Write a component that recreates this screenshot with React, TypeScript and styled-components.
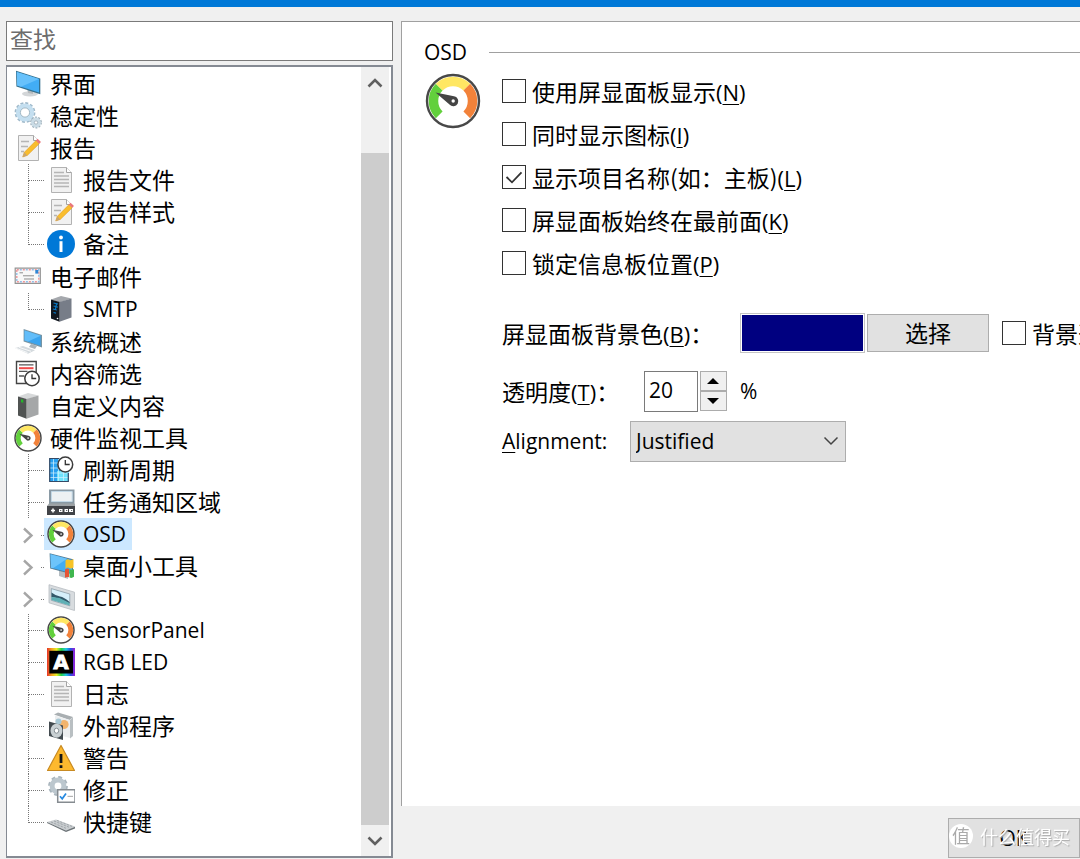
import React, { useState } from 'react';
import styled, { createGlobalStyle, css } from 'styled-components';

const cjk = '"Noto Sans CJK SC", "Open Sans", sans-serif';
const latin = '"Open Sans", "Noto Sans", "Noto Sans CJK SC", sans-serif';

const GlobalStyle = createGlobalStyle`
  *, *::before, *::after { box-sizing: border-box; }
  body {
    margin: 0;
    background: #f0f0f0;
    color: #000;
    font-family: ${cjk};
    font-size: 23px;
    line-height: 32px;
    overflow: hidden;
  }
  button, input, select { font: inherit; color: inherit; margin: 0; border-radius: 0; }
  ul { list-style: none; margin: 0; padding: 0; }
`;

/* ---------- window frame ---------- */

const Window = styled.div`
  display: flex;
  flex-direction: column;
  min-height: 100vh;
`;

const TitleStrip = styled.header`
  height: 7px;
  flex: none;
  background: #0078d7;
`;

const Body = styled.div`
  flex: 1;
  display: grid;
  grid-template-columns: 387px minmax(0, 1fr);
  column-gap: 8px;
  padding: 14px 0 0 6px;
`;

const Sidebar = styled.nav`
  display: flex;
  flex-direction: column;
  gap: 4px;
  padding-bottom: 1px;
`;

const SearchBox = styled.input`
  height: 40px;
  width: 100%;
  padding: 0 3px 6px;
  border: 1px solid #7a7a7a;
  background: #fff;
  outline: none;
  &::placeholder { color: #6d6d6d; opacity: 1; }
`;

const TreeFrame = styled.div`
  flex: 1;
  display: flex;
  justify-content: space-between;
  padding-right: 2px;
  border: 2px solid #858a93;
  border-left-width: 1px;
  background: #fff;
`;

/* ---------- tree ---------- */

const Tree = styled.ul`
  padding: 1px 0 16px 4px;
`;

const SubTree = styled.ul`
  padding: 0 0 1px 11px;
`;

const Row = styled.div`
  display: flex;
  height: 32px;
`;

const NodeButton = styled.button<{ $selected?: boolean }>`
  display: flex;
  align-items: center;
  gap: 8px;
  height: 32px;
  padding: 0 6px 0 3px;
  border: 0;
  background: ${p => (p.$selected ? '#cce8ff' : 'transparent')};
  white-space: nowrap;
`;

const NodeText = styled.span<{ $latin?: boolean }>`
  padding-bottom: 3px;
  line-height: 28px;
  ${p => p.$latin && css`padding-bottom: 0; font-family: ${latin}; font-size: 21px;`}
`;

const Guide = styled.span<{ $last?: boolean }>`
  display: grid;
  grid-template-rows: 17px 15px;
  width: 16px;
  margin-left: 6px;
  &::before {
    content: '';
    border-left: 1px dotted #777;
    border-bottom: 1px dotted #777;
  }
  &::after {
    content: '';
    border-left: ${p => (p.$last ? '0' : '1px dotted #777')};
  }
`;

const Expander = styled.button`
  display: flex;
  align-items: center;
  justify-content: space-between;
  width: 22px;
  height: 32px;
  padding: 2px 0 0;
  border: 0;
  background: none;
  &::after {
    content: '';
    width: 3px;
    border-top: 1px dotted #777;
  }
`;

/* ---------- scroll bar ---------- */

const ScrollBar = styled.div`
  display: flex;
  flex-direction: column;
  width: 28px;
  background: #f0f0f0;
`;

const ScrollArrow = styled.button`
  display: grid;
  place-items: center;
  height: 31px;
  width: 28px;
  padding: 0;
  border: 0;
  background: none;
`;

const Thumb = styled.div`
  flex: 1;
  margin-top: 55px;
  background: #cdcdcd;
`;

/* ---------- settings page ---------- */

const Main = styled.main`
  display: flex;
  flex-direction: column;
`;

const Panel = styled.section`
  flex: 1;
  padding: 14px 0 0 22px;
  border-left: 1px solid #a0a0a0;
  border-top: 1px solid #a0a0a0;
  background: #fff;
  overflow: hidden;
`;

const Heading = styled.h1`
  display: flex;
  align-items: center;
  gap: 22px;
  margin: 0;
  font: 400 21px/32px ${latin};
  &::after {
    content: '';
    flex: 1;
    height: 1px;
    background: #a0a0a0;
  }
`;

const Content = styled.div`
  display: grid;
  grid-template-columns: 57px auto;
  column-gap: 21px;
  align-items: start;
  padding-top: 1px;
  white-space: nowrap;
`;

const GaugeSlot = styled.div`
  padding: 4px 0 0 1px;
  line-height: 0;
`;

const Options = styled.div`
  display: flex;
  flex-direction: column;
  margin-bottom: 26px;
`;

const CheckLabel = styled.label`
  display: flex;
  align-items: center;
  gap: 6px;
  height: 43px;
`;

const CheckCell = styled.span`
  display: grid;
  width: 24px;
  height: 24px;
  & > * { grid-area: 1 / 1; }
  & > svg { pointer-events: none; }
`;

const CheckInput = styled.input`
  appearance: none;
  width: 24px;
  height: 24px;
  border: 1px solid #333;
  background: #fff;
`;

const CheckText = styled.span`
  line-height: 40px;
`;

const Key = styled.span`
  font-family: ${latin};
  font-size: 22px;
  line-height: 32px;
  & > u { text-decoration-thickness: 1px; text-underline-offset: 3px; }
`;

const FieldRow = styled.div<{ $height: number }>`
  display: flex;
  align-items: center;
  height: ${p => p.$height}px;
`;

const FieldLabel = styled.label<{ $width: number; $latin?: boolean }>`
  width: ${p => p.$width}px;
  flex: none;
  ${p => p.$latin && css`font-family: ${latin}; font-size: 21px;`}
  & > u { text-decoration-thickness: 1px; text-underline-offset: 3px; }
`;

const Swatch = styled.button`
  flex: none;
  width: 125px;
  height: 40px;
  margin-right: 2px;
  padding: 1px;
  border: 1px solid #c4c4c4;
  background: #000080 content-box;
`;

const PushButton = styled.button<{ $width: number }>`
  flex: none;
  width: ${p => p.$width}px;
  height: 38px;
  padding: 0 0 3px;
  border: 1px solid #adadad;
  background: #e1e1e1;
`;

const TrailingCheck = styled.div`
  margin-left: 13px;
`;

const NumberBox = styled.input`
  width: 54px;
  height: 41px;
  padding: 0 4px 2px;
  border: 1px solid #7a7a7a;
  background: #fff;
  font-family: ${latin};
  font-size: 21px;
`;

const Spinner = styled.div`
  display: flex;
  flex-direction: column;
  margin: 0 13px 0 2px;
`;

const SpinButton = styled.button`
  display: grid;
  place-items: center;
  width: 27px;
  height: 20px;
  padding: 0 2px 0 0;
  border: 1px solid #acacac;
  background: #f0f0f0;
`;

const Unit = styled.span`
  font: 21px/32px ${latin};
`;

const SelectCell = styled.div`
  display: grid;
  align-items: center;
  width: 216px;
  & > * { grid-area: 1 / 1; }
  & > svg { justify-self: end; margin-right: 7px; pointer-events: none; }
`;

const SelectBox = styled.select`
  appearance: none;
  width: 100%;
  height: 41px;
  padding: 0 30px 0 5px;
  border: 1px solid #adadad;
  background: #e1e1e1;
  font-family: ${latin};
  font-size: 21px;
`;

const Footer = styled.footer`
  display: flex;
  justify-content: flex-end;
  padding: 12px 0 1px;
`;

const OkButton = styled.button`
  width: 132px;
  height: 40px;
  padding: 0;
  border: 1px solid #adadad;
  background: #e1e1e1;
  font-family: ${latin};
  font-size: 21px;
`;

const Watermark = styled.div`
  position: fixed;
  right: 10px;
  bottom: 11px;
  display: flex;
  align-items: center;
  gap: 7px;
  color: #fff;
  font-size: 18px;
  line-height: 24px;
  text-shadow: 1px 1px 1px #aaa;
  pointer-events: none;
`;

const WatermarkBadge = styled.span`
  width: 24px;
  height: 24px;
  border-radius: 50%;
  background: #fff;
  color: #aaa;
  font-size: 18px;
  line-height: 22px;
  text-align: center;
  text-shadow: none;
`;

/* ---------- icons ---------- */

const Icon = ({ children, size = 28, box = 28 }: { children: React.ReactNode; size?: number; box?: number }) => (
  <svg width={size} height={size} viewBox={`0 0 ${box} ${box}`} fill="none" aria-hidden="true">{children}</svg>
);

const Gauge = ({ size = 28 }: { size?: number }) => (
  <Icon size={size} box={56}>
    <circle cx="28" cy="28" r="26" fill="#fff" stroke="#484848" strokeWidth={size > 30 ? 2.4 : 3} />
    <g strokeWidth="9.5">
      <path d="M14.2 41.8A19.5 19.5 0 0 1 14.2 14.2" stroke="#62d03c" />
      <path d="M14.2 14.2A19.5 19.5 0 0 1 41.8 14.2" stroke="#ffe763" />
      <path d="M41.8 14.2A19.5 19.5 0 0 1 41.8 41.8" stroke="#f2823a" />
    </g>
    <path d="M10.5 19.5L29 23.3A5 5 0 1 1 24.5 31.5Z" fill="#444" />
    <circle cx="28.2" cy="28" r="1.7" fill="#fff" />
  </Icon>
);

const Monitor = () => (
  <Icon>
    <ellipse cx="16" cy="23.8" rx="8" ry="2.6" fill="#d3d6d8" />
    <path d="M13 18l6 2v4l-5-1z" fill="#b5babd" />
    <path d="M2 .8L26.3 8.4V24.2L2.4 16.4Z" fill="#35718f" />
    <path d="M2.8 2L25 9V22.6L3.2 15.6Z" fill="#42adf5" />
    <path d="M2.8 2L25 9 7 16.8 3.2 15.6Z" fill="#67c1fb" />
  </Icon>
);

const Gears = () => (
  <Icon>
    <circle cx="11" cy="10.5" r="9.4" stroke="#9fb9ca" strokeWidth="2" strokeDasharray="3 1.92" />
    <circle cx="11" cy="10.5" r="6.9" stroke="#c4dff0" strokeWidth="4.4" />
    <circle cx="11" cy="10.5" r="4.6" stroke="#91a9b7" strokeWidth=".8" />
    <circle cx="22" cy="20.5" r="5.1" stroke="#9eb0bb" strokeWidth="1.6" strokeDasharray="2 1.2" />
    <circle cx="22" cy="20.5" r="3.4" stroke="#cadce6" strokeWidth="3" />
    <circle cx="22" cy="20.5" r="1.7" stroke="#879aa6" strokeWidth=".7" />
  </Icon>
);

const Page = ({ pencil }: { pencil?: boolean }) => (
  <Icon>
    <path d="M4.5 1.5H19.5L24.5 6.5V26.5H4.5Z" fill="#f1f1f1" stroke="#b2b2b2" />
    <path d="M19.5 1.5V6.5H24.5" fill="#fff" stroke="#a4a4a4" />
    <path d={pencil ? 'M7 7.5H15M7 12.5H14M7 17.5H10' : 'M7 6.5H17M7 10H22M7 13.5H22M7 17H22M7 20.5H22'} stroke="#b5b5b5" strokeWidth="1.3" />
    {pencil && (
      <>
        <path d="M8.7 23L10.3 18.3 22 6.6 25.2 9.8 13.3 21.4Z" fill="#f9bd2d" stroke="#da9320" strokeWidth=".5" />
        <path d="M8.7 23L10.3 18.3 13.3 21.4Z" fill="#c9a66f" />
        <path d="M21.8 6.6L23.6 4.8 27 8 25.2 9.8Z" fill="#e9777c" />
      </>
    )}
  </Icon>
);

const Info = () => (
  <Icon>
    <circle cx="14" cy="14" r="14" fill="#0078d7" />
    <path d="M14 11.2V22" stroke="#fff" strokeWidth="3" />
    <circle cx="14" cy="7.5" r="1.9" fill="#fff" />
  </Icon>
);

const Mail = () => (
  <Icon>
    <path d="M1.2 5.2H26.3V20.3H1.2Z" fill="#f8f8f8" stroke="#949494" strokeWidth="1.2" />
    <path d="M2.8 6.7H24.8V18.8H2.8Z" stroke="#ee969a" strokeWidth="1.4" strokeDasharray="2 4" />
    <path d="M2.8 6.7H24.8V18.8H2.8Z" stroke="#93bde6" strokeWidth="1.4" strokeDasharray="2 4" strokeDashoffset="3" />
    <path d="M21.3 7h3v3.6h-3z" fill="#2f86d4" />
    <path d="M5.5 9.8H9M9 12.8H20M10 16H20" stroke="#8d8d8d" strokeWidth="1" />
  </Icon>
);

const Server = ({ dark }: { dark?: boolean }) => (
  <Icon>
    <path d="M4 4.5L14 1 24.5 3.6 12.5 7.5Z" fill={dark ? '#a5a8ad' : '#d7d9da'} />
    <path d="M12.5 7L24.5 3.6V22.5L12.5 26.8Z" fill={dark ? '#777d88' : '#a5a7a8'} />
    <path d="M4 4.5L12.5 7V26.8L4 23.5Z" fill={dark ? '#12171f' : '#505352'} />
    {dark
      ? <path d="M6.5 8l4.5 1M6.5 11l4.5 1M6 14l4 1M6.5 17.5l2.5.7M9.5 9l-1.2 6" stroke="#087ac8" strokeWidth="1.2" />
      : <path d="M7 7.3l2.3.5v3L7 10.2z" fill="#24b62b" />}
    {dark && <circle cx="10.5" cy="23.5" r=".8" fill="#fff" />}
  </Icon>
);

const Workstation = () => (
  <Icon>
    <path d="M1 20l8-2 12 4.2-7 3.6z" fill="#d4dade" />
    <path d="M2 20.2l11.5 4.4M5 19.3l12 4" stroke="#fff" strokeWidth=".8" />
    <path d="M17 16l6 2-2 3-6-2z" fill="#aab3b9" />
    <path d="M9.6 1L28 7V19.5L9.6 13.4Z" fill="#7694a4" />
    <path d="M10.6 2.4L26.6 7.7V17.8L10.6 12.5Z" fill="#3aa4ef" />
    <path d="M10.6 2.4L26.6 7.7 14 13.5 10.6 12.5Z" fill="#62bdf9" />
  </Icon>
);

const Clock = ({ x, y, r }: { x: number; y: number; r: number }) => (
  <>
    <circle cx={x} cy={y} r={r} fill="#fff" stroke="#3c3c3c" strokeWidth="1.5" />
    <path d={`M${x} ${y - r + 3}V${y}H${x + r - 3}`} stroke="#333" strokeWidth="1.3" />
  </>
);

const Filter = () => (
  <Icon>
    <path d="M2.5 1.5H22.2V23.5H2.5Z" fill="#fff" stroke="#444" strokeWidth="1.4" />
    <path d="M5 4.8H19.5M5 11.3H13.5M5 16H10" stroke="#555" strokeWidth="1.3" />
    <path d="M5 8.2H19.5" stroke="#ef4a4a" strokeWidth="2" />
    <Clock x={18} y={18.5} r={7.2} />
  </Icon>
);

const Refresh = () => (
  <Icon>
    <path d="M2.5 2.5H21.5V25.5H2.5Z" fill="#28a1ef" />
    <path d="M10 15H21.5V25.5H10Z" fill="#6fe2fb" />
    <path d="M6.5 2.5V25.5M11.5 2.5V25.5M16.5 2.5V25.5M2.5 7H21.5M2.5 12H21.5M2.5 17H21.5M2.5 21.5H21.5" stroke="#d4f2ff" strokeWidth=".7" />
    <path d="M12 2.5H2.7V25.5H21.3V17" stroke="#344a66" strokeWidth="1.2" />
    <Clock x={18.3} y={8.5} r={7.4} />
  </Icon>
);

const Tray = () => (
  <Icon>
    <path d="M2 1.5H27.5V17H2Z" fill="#8a9aa5" />
    <path d="M4.5 3.5H25.2V13.5H4.5Z" fill="#edf1f3" stroke="#c2d8e6" />
    <path d="M2 15.5H27.5L28.5 18H0Z" fill="#9ea3a6" />
    <path d="M0 18H28.5V27H0Z" fill="#414347" />
    <path d="M4 22.5h4M6 20.5v4" stroke="#fff" strokeWidth="1.6" />
    <path d="M12 22.5h3.5m2 0h3.5m1 0h4" stroke="#fff" strokeWidth="3" />
    <path d="M13.2 22.5h1m5 0h1m4 0h1" stroke="#414347" strokeWidth="1" />
  </Icon>
);

const Gadget = () => (
  <Icon>
    <path d="M12 18l9 3v6l-9-3z" fill="#b5bdc2" />
    <path d="M2.6 1.2L26 7.3V22.5L3.2 16.6Z" fill="#557c93" />
    <path d="M3.5 2.3L25 8V21.2L4 15.7Z" fill="#42adf4" />
    <path d="M3.5 2.3L20 6.8 6 16.2 4 15.7Z" fill="#6dc4fa" />
    <path d="M18.5 8.6Q20.5 6.5 22.3 7.7T26.5 7V15.6Q24 17.2 22.3 16T18.5 16.8Z" fill="#f7c326" />
    <path d="M18 17.6Q20 15.9 22 17V25.3Q20 24.4 18 25.8Z" fill="#e65435" />
    <path d="M22.5 17.2Q24.7 18.6 27 17V24.8Q24.7 26.6 22.5 25.4Z" fill="#3fb64e" />
  </Icon>
);

const Lcd = () => (
  <Icon>
    <path d="M2 .7L27.5 8.2V26.5L2 18.8Z" fill="#d8dcdf" stroke="#b6bbc0" strokeWidth=".8" />
    <path d="M4.3 4.6L22.8 10V21.8L4.3 16.3Z" fill="#d6effa" stroke="#83949d" strokeWidth=".7" />
    <path d="M4.5 8.5Q9 12 13 12.5T22.6 18V19.5Q12 14 4.5 13Z" fill="#33596b" />
    <path d="M4.5 13l8 1 10 5v2.4l-18-5.4z" fill="#5fb0b5" />
  </Icon>
);

const hues = ['#e53329', '#f4a21f', '#e8ec23', '#24cf46', '#20c9e5', '#294ee2', '#a819d4'];
const Rgb = () => (
  <Icon>
    <defs>
      <linearGradient id="rainbow">
        {hues.map((c, i) => <stop key={c} offset={i / 6} stopColor={c} />)}
      </linearGradient>
    </defs>
    <path d="M0 0H28.5V28.5H0Z" fill="url(#rainbow)" />
    <path d="M2.3 2.8H26V25.5H2.3Z" fill="#000" />
    <text x="14" y="21.3" fill="#fff" stroke="#fff" strokeWidth=".8" textAnchor="middle" fontFamily="DejaVu Sans, sans-serif" fontWeight="700" fontSize="20">A</text>
  </Icon>
);

const Software = () => (
  <Icon>
    <path d="M7 2.5L11 .5 26 5 22.5 8Z" fill="#a9afb2" />
    <path d="M8 3.5L23 8V26L8 22Z" fill="#eceeef" />
    <path d="M23 8L26 5V24L23 26.5Z" fill="#b9bfc2" />
    <circle cx="17" cy="12.5" r="4.6" fill="#f2b46d" />
    <circle cx="11.5" cy="9.5" r="3" fill="#a8c8d5" />
    <path d="M2 9.5L16 13.5V28L2 24Z" fill="#434b50" />
    <ellipse cx="9.5" cy="18.7" rx="6" ry="7" fill="#c9d0d3" />
    <ellipse cx="9.5" cy="18.7" rx="2.2" ry="2.5" fill="#fff" stroke="#7d878c" strokeWidth=".9" />
  </Icon>
);

const Warning = () => (
  <Icon>
    <path d="M14 1.5L27.5 26.5H.5Z" fill="#fdb92e" stroke="#c88a22" strokeWidth="1.2" strokeLinejoin="round" />
    <path d="M14 10V19M14 21.3V24" stroke="#171717" strokeWidth="2.8" />
  </Icon>
);

const Correction = () => (
  <Icon>
    <circle cx="11" cy="10" r="8.7" stroke="#a9b5bd" strokeWidth="2.4" strokeDasharray="3.8 3.03" />
    <circle cx="11" cy="10" r="5.9" stroke="#bcc7ce" strokeWidth="5" />
    <path d="M10.7 13.7H28V26.3H10.7Z" fill="#fff" stroke="#858b90" strokeWidth="1.5" />
    <path d="M13 20.3L15.2 22.8 19 17.5" stroke="#288ae0" strokeWidth="1.7" />
    <path d="M20.5 20.4H26" stroke="#b4b4b4" strokeWidth="1.2" />
  </Icon>
);

const Keyboard = () => (
  <Icon>
    <path d="M0 14L9 11.5 28.5 18.6 19 22.4Z" fill="#c9cdd0" />
    <path d="M0 14L19 22.4 28.5 18.6V20.2L19 24 0 15Z" fill="#6d7478" />
    <path d="M4 14L19 20.3M7 13L22 19.2M10 12.4L25 18.4" stroke="#a0a6aa" strokeWidth="1" strokeDasharray="2.3 1.2" />
  </Icon>
);

const Chevron = ({ d, color, width, height, stroke }: { d: string; color: string; width: number; height: number; stroke: number }) => (
  <svg width={width} height={height} fill="none" aria-hidden="true">
    <path d={d} stroke={color} strokeWidth={stroke} />
  </svg>
);

/* ---------- data ---------- */

type Node = { text: string; icon: React.ReactNode; latin?: boolean; expandable?: boolean; children?: Node[] };

const nodes: Node[] = [
  { text: '界面', icon: <Monitor /> },
  { text: '稳定性', icon: <Gears /> },
  {
    text: '报告', icon: <Page pencil />, children: [
      { text: '报告文件', icon: <Page /> },
      { text: '报告样式', icon: <Page pencil /> },
      { text: '备注', icon: <Info /> },
    ],
  },
  { text: '电子邮件', icon: <Mail />, children: [{ text: 'SMTP', icon: <Server dark />, latin: true }] },
  { text: '系统概述', icon: <Workstation /> },
  { text: '内容筛选', icon: <Filter /> },
  { text: '自定义内容', icon: <Server /> },
  {
    text: '硬件监视工具', icon: <Gauge />, children: [
      { text: '刷新周期', icon: <Refresh /> },
      { text: '任务通知区域', icon: <Tray /> },
      { text: 'OSD', icon: <Gauge />, latin: true, expandable: true },
      { text: '桌面小工具', icon: <Gadget />, expandable: true },
      { text: 'LCD', icon: <Lcd />, latin: true, expandable: true },
      { text: 'SensorPanel', icon: <Gauge />, latin: true },
      { text: 'RGB LED', icon: <Rgb />, latin: true },
      { text: '日志', icon: <Page /> },
      { text: '外部程序', icon: <Software /> },
      { text: '警告', icon: <Warning /> },
      { text: '修正', icon: <Correction /> },
      { text: '快捷键', icon: <Keyboard /> },
    ],
  },
];

const options = [
  { text: '使用屏显面板显示', key: 'N', on: false },
  { text: '同时显示图标', key: 'I', on: false },
  { text: '显示项目名称(如：主板)', key: 'L', on: true },
  { text: '屏显面板始终在最前面', key: 'K', on: false },
  { text: '锁定信息板位置', key: 'P', on: false },
];

/* ---------- parts ---------- */

const Mnemonic = ({ letter }: { letter: string }) => <Key>(<u>{letter}</u>)</Key>;

function Check({ initial = false, children }: { initial?: boolean; children: React.ReactNode }) {
  const [on, setOn] = useState(initial);
  return (
    <CheckLabel>
      <CheckCell>
        <CheckInput type="checkbox" checked={on} onChange={e => setOn(e.target.checked)} />
        {on && <Chevron width={24} height={24} stroke={1.8} color="#333" d="M4.5 12L10 17.3 19.5 7.3" />}
      </CheckCell>
      <CheckText>{children}</CheckText>
    </CheckLabel>
  );
}

function TreeItem({ node, depth, last, selected, onSelect }: {
  node: Node; depth: number; last: boolean; selected: string; onSelect: (t: string) => void;
}) {
  return (
    <li>
      <Row>
        {depth > 0 && (node.expandable
          ? (
            <Expander aria-label={`展开 ${node.text}`}>
              <Chevron width={14} height={18} stroke={2.4} color="#a6a6a6" d="M2 2.5L9.5 9.5 2 16.5" />
            </Expander>
          )
          : <Guide $last={last} />)}
        <NodeButton $selected={selected === node.text} onClick={() => onSelect(node.text)}>
          {node.icon}
          <NodeText $latin={node.latin}>{node.text}</NodeText>
        </NodeButton>
      </Row>
      {node.children && (
        <SubTree>
          {node.children.map((c, i) => (
            <TreeItem key={c.text} node={c} depth={depth + 1} last={i === node.children!.length - 1} selected={selected} onSelect={onSelect} />
          ))}
        </SubTree>
      )}
    </li>
  );
}

export default function App() {
  const [selected, setSelected] = useState('OSD');
  const [opacity, setOpacity] = useState(20);
  return (
    <Window>
      <GlobalStyle />
      <TitleStrip />
      <Body>
        <Sidebar>
          <SearchBox type="text" placeholder="查找" aria-label="查找" />
          <TreeFrame>
            <Tree>
              {nodes.map(n => (
                <TreeItem key={n.text} node={n} depth={0} last={false} selected={selected} onSelect={setSelected} />
              ))}
            </Tree>
            <ScrollBar>
              <ScrollArrow aria-label="向上滚动">
                <Chevron width={16} height={12} stroke={2.6} color="#606060" d="M1.5 9.5L8 3 14.5 9.5" />
              </ScrollArrow>
              <Thumb />
              <ScrollArrow aria-label="向下滚动">
                <Chevron width={16} height={12} stroke={2.6} color="#606060" d="M1.5 2.5L8 9 14.5 2.5" />
              </ScrollArrow>
            </ScrollBar>
          </TreeFrame>
        </Sidebar>
        <Main>
          <Panel>
            <Heading>OSD</Heading>
            <Content>
              <GaugeSlot><Gauge size={56} /></GaugeSlot>
              <div>
                <Options>
                  {options.map(o => (
                    <Check key={o.key} initial={o.on}>{o.text}<Mnemonic letter={o.key} /></Check>
                  ))}
                </Options>
                <FieldRow $height={46}>
                  <FieldLabel $width={238} htmlFor="bg-color">屏显面板背景色<Mnemonic letter="B" />：</FieldLabel>
                  <Swatch id="bg-color" aria-label="背景色" />
                  <PushButton $width={122}>选择</PushButton>
                  <TrailingCheck><Check>背景透明</Check></TrailingCheck>
                </FieldRow>
                <FieldRow $height={70}>
                  <FieldLabel $width={142} htmlFor="opacity">透明度<Mnemonic letter="T" />：</FieldLabel>
                  <NumberBox id="opacity" type="text" value={opacity} onChange={e => setOpacity(Number(e.target.value) || 0)} />
                  <Spinner>
                    <SpinButton aria-label="增加" onClick={() => setOpacity(v => Math.min(100, v + 1))}>
                      <svg width="12" height="6" aria-hidden="true"><path d="M0 6L6 0 12 6Z" /></svg>
                    </SpinButton>
                    <SpinButton aria-label="减少" onClick={() => setOpacity(v => Math.max(0, v - 1))}>
                      <svg width="12" height="6" aria-hidden="true"><path d="M0 0L6 6 12 0Z" /></svg>
                    </SpinButton>
                  </Spinner>
                  <Unit>%</Unit>
                </FieldRow>
                <FieldRow $height={30}>
                  <FieldLabel $width={128} $latin htmlFor="alignment"><u>A</u>lignment:</FieldLabel>
                  <SelectCell>
                    <SelectBox id="alignment" defaultValue="Justified">
                      <option>Justified</option>
                      <option>Left</option>
                      <option>Right</option>
                    </SelectBox>
                    <Chevron width={16} height={10} stroke={1.5} color="#444" d="M1.5 1.5L8 8 14.5 1.5" />
                  </SelectCell>
                </FieldRow>
              </div>
            </Content>
          </Panel>
          <Footer>
            <OkButton>OK</OkButton>
          </Footer>
        </Main>
      </Body>
      <Watermark>
        <WatermarkBadge>值</WatermarkBadge>
        什么值得买
      </Watermark>
    </Window>
  );
}
